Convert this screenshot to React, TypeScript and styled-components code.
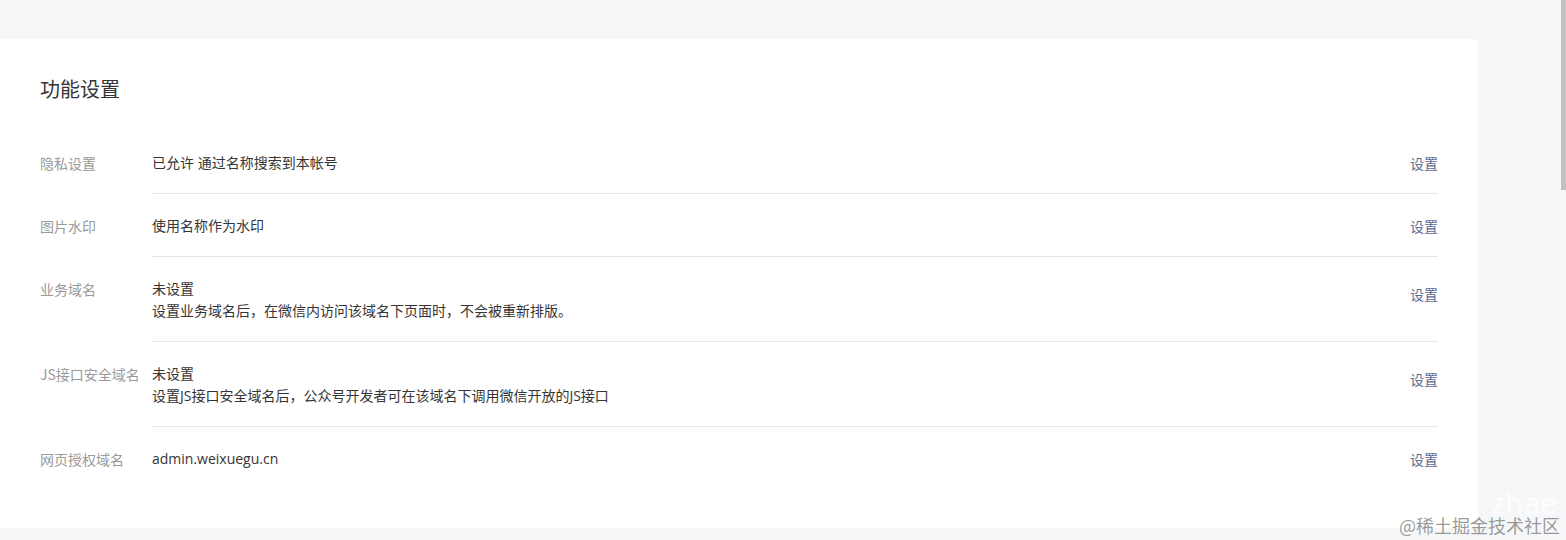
import { createGlobalStyle, styled } from "styled-components";

const GlobalStyle = createGlobalStyle`
  html, body {
    margin: 0;
    padding: 0;
    background: #f6f7f9;
    font-family: "Open Sans", "Noto Sans CJK SC", sans-serif;
    overflow: hidden;
  }
`;

const Page = styled.div`
  width: 1566px;
  height: 540px;
  padding-top: 39px;
  box-sizing: border-box;
  position: relative;
`;

const Card = styled.section`
  width: 1478px;
  box-sizing: border-box;
  background: #fff;
  border-radius: 0 4px 4px 0;
  padding: 36px 40px 39px 40px;
`;

const Title = styled.h2`
  margin: 0 0 28px;
  font-size: 20px;
  line-height: 28px;
  font-weight: 400;
  color: #353535;
  font-family: "Noto Sans CJK SC", sans-serif;
`;

const Row = styled.div`
  display: flex;
`;

const Label = styled.div`
  width: 112px;
  flex-shrink: 0;
  padding-top: 21px;
  font-size: 14px;
  line-height: 22px;
  color: #9a9a9a;
  font-family: "Noto Sans CJK SC", sans-serif;
  white-space: nowrap;
`;

const Body = styled.div<{ $last?: boolean }>`
  flex: 1;
  display: flex;
  justify-content: space-between;
  align-items: flex-start;
  padding: 21px 0 19px;
  border-bottom: ${(p) => (p.$last ? "none" : "1px solid #e7e7eb")};
`;

const Value = styled.div`
  font-size: 14px;
  line-height: 22px;
  color: #353535;
  font-family: "Open Sans", "Noto Sans CJK SC", sans-serif;
`;

const Line = styled.div``;

const Link = styled.a<{ $offset?: number }>`
  font-size: 14px;
  line-height: 22px;
  color: #576b95;
  text-decoration: none;
  cursor: pointer;
  margin-top: ${(p) => p.$offset ?? 0}px;
  font-family: "Noto Sans CJK SC", sans-serif;
`;

const Scrollbar = styled.div`
  position: fixed;
  top: 0;
  right: 0;
  width: 5px;
  height: 190px;
  background: #c1c1c1;
`;

const Watermark = styled.div`
  position: absolute;
  right: 6px;
  bottom: 3px;
  font-size: 18px;
  line-height: 24px;
  color: rgba(120, 120, 120, 0.75);
  font-family: "Noto Sans CJK SC", sans-serif;
  text-shadow: 0 0 1px rgba(255, 255, 255, 0.6);
`;

const Ghost = styled.div`
  position: absolute;
  right: 9px;
  bottom: 22px;
  font-size: 30px;
  line-height: 30px;
  color: rgba(255, 255, 255, 0.85);
  font-family: "Open Sans", sans-serif;
`;

type Setting = {
  label: string;
  lines: string[];
  offset?: number;
};

const settings: Setting[] = [
  { label: "隐私设置", lines: ["已允许 通过名称搜索到本帐号"] },
  { label: "图片水印", lines: ["使用名称作为水印"] },
  {
    label: "业务域名",
    lines: ["未设置", "设置业务域名后，在微信内访问该域名下页面时，不会被重新排版。"],
    offset: 5,
  },
  {
    label: "JS接口安全域名",
    lines: ["未设置", "设置JS接口安全域名后，公众号开发者可在该域名下调用微信开放的JS接口"],
    offset: 5,
  },
  { label: "网页授权域名", lines: ["admin.weixuegu.cn"] },
];

function App() {
  return (
    <>
      <GlobalStyle />
      <Page>
        <Card>
          <Title>功能设置</Title>
          {settings.map((s, i) => (
            <Row key={s.label}>
              <Label>{s.label}</Label>
              <Body $last={i === settings.length - 1}>
                <Value>
                  {s.lines.map((l) => (
                    <Line key={l}>{l}</Line>
                  ))}
                </Value>
                <Link $offset={s.offset}>设置</Link>
              </Body>
            </Row>
          ))}
        </Card>
        <Ghost>zhae</Ghost>
        <Watermark>@稀土掘金技术社区</Watermark>
        <Scrollbar />
      </Page>
    </>
  );
}

export default App;
